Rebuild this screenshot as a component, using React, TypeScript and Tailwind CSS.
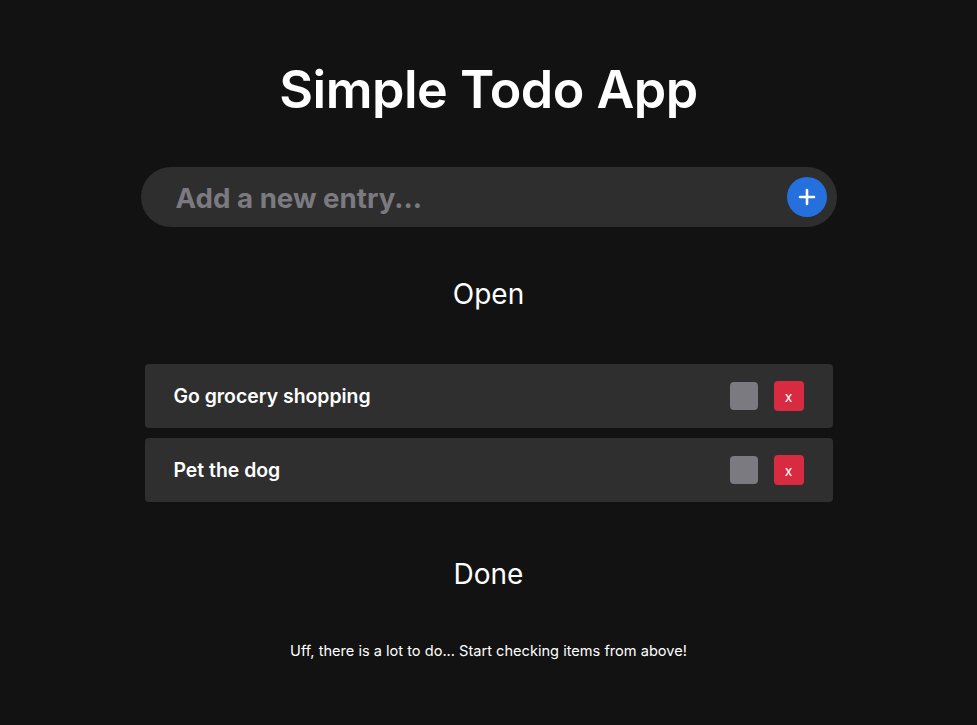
import React from "react";

const font = { fontFamily: "Inter, 'Noto Sans', sans-serif" };

function Row({ text }: { text: string }) {
  return (
    <div className="flex h-[64px] items-center justify-between rounded-[4px] bg-[#2f2f2f] pl-[29px] pr-[29px]">
      <span className="pt-[2px] text-[19.4px] font-semibold text-white">{text}</span>
      <div className="flex items-center gap-[16px]">
        <div className="h-[28px] w-[28px] rounded-[4px] bg-[#7b7a80]" />
        <div className="flex h-[30px] w-[30px] items-center justify-center rounded-[4px] bg-[#d82a41] text-[14px] text-white">
          x
        </div>
      </div>
    </div>
  );
}

export default function App() {
  return (
    <div className="min-h-[725px] w-full bg-[#121212] text-white" style={font}>
      <div className="mx-auto flex w-[696px] flex-col items-center pt-[54px]">
        <h1 className="text-[52px] font-semibold leading-[72px] tracking-[-0.5px]">Simple Todo App</h1>
        <div className="mt-[41px] flex h-[60px] w-[696px] items-center justify-between rounded-full bg-[#2e2e2e] pl-[35px] pr-[10px]">
          <span className="pt-[3px] text-[27.7px] font-bold text-[#7b7a80]">Add a new entry...</span>
          <div className="flex h-[40px] w-[40px] items-center justify-center rounded-full bg-[#2670dd]">
            <svg width="18" height="18" viewBox="0 0 18 18">
              <path d="M9 2v14M2 9h14" stroke="white" strokeWidth="2.6" strokeLinecap="round" />
            </svg>
          </div>
        </div>
        <h2 className="mt-[47px] text-[28px] leading-[40px]">Open</h2>
        <div className="mt-[50px] flex w-[688px] flex-col gap-[10px]">
          <Row text="Go grocery shopping" />
          <Row text="Pet the dog" />
        </div>
        <h2 className="mt-[52px] text-[28px] leading-[40px]">Done</h2>
        <p className="mt-[45px] text-[14.6px] leading-[24px]">Uff, there is a lot to do... Start checking items from above!</p>
      </div>
    </div>
  );
}
